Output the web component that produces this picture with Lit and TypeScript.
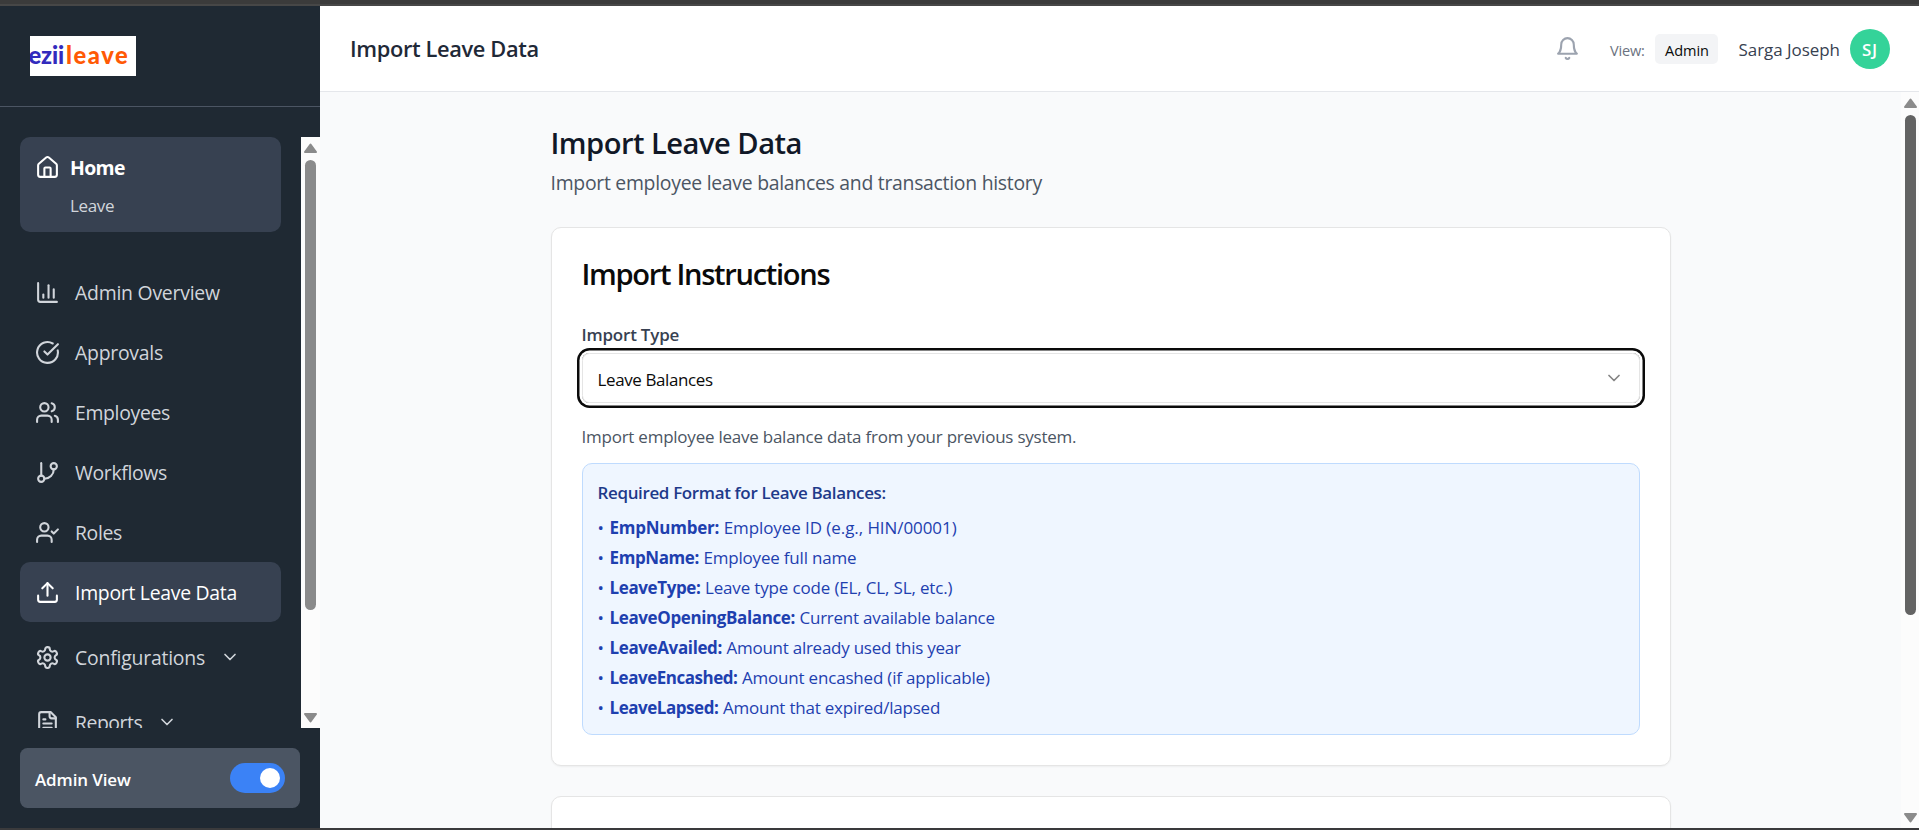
import { LitElement, html, svg, css, nothing } from "lit";
import { customElement, property, state } from "lit/decorators.js";
import { classMap } from "lit/directives/class-map.js";

const ICONS: Record<string, unknown> = {
  home: svg`<path d="M15 21v-8a1 1 0 0 0-1-1h-4a1 1 0 0 0-1 1v8"/><path d="M3 10a2 2 0 0 1 .709-1.528l7-5.999a2 2 0 0 1 2.582 0l7 5.999A2 2 0 0 1 21 10v9a2 2 0 0 1-2 2H5a2 2 0 0 1-2-2z"/>`,
  chart: svg`<path d="M3 3v16a2 2 0 0 0 2 2h16"/><path d="M18 17V9"/><path d="M13 17V5"/><path d="M8 17v-3"/>`,
  check: svg`<path d="M21.801 10A10 10 0 1 1 17 3.335"/><path d="m9 11 3 3L22 4"/>`,
  users: svg`<path d="M16 21v-2a4 4 0 0 0-4-4H6a4 4 0 0 0-4 4v2"/><circle cx="9" cy="7" r="4"/><path d="M22 21v-2a4 4 0 0 0-3-3.87"/><path d="M16 3.13a4 4 0 0 1 0 7.75"/>`,
  branch: svg`<path d="M6 3v12"/><circle cx="18" cy="6" r="3"/><circle cx="6" cy="18" r="3"/><path d="M18 9a9 9 0 0 1-9 9"/>`,
  userCheck: svg`<path d="M16 21v-2a4 4 0 0 0-4-4H6a4 4 0 0 0-4 4v2"/><circle cx="9" cy="7" r="4"/><path d="m16 11 2 2 4-4"/>`,
  upload: svg`<path d="M21 15v4a2 2 0 0 1-2 2H5a2 2 0 0 1-2-2v-4"/><path d="m17 8-5-5-5 5"/><path d="M12 3v12"/>`,
  settings: svg`<path d="M12.22 2h-.44a2 2 0 0 0-2 2v.18a2 2 0 0 1-1 1.73l-.43.25a2 2 0 0 1-2 0l-.15-.08a2 2 0 0 0-2.73.73l-.22.38a2 2 0 0 0 .73 2.73l.15.1a2 2 0 0 1 1 1.72v.51a2 2 0 0 1-1 1.74l-.15.09a2 2 0 0 0-.73 2.73l.22.38a2 2 0 0 0 2.73.73l.15-.08a2 2 0 0 1 2 0l.43.25a2 2 0 0 1 1 1.73V20a2 2 0 0 0 2 2h.44a2 2 0 0 0 2-2v-.18a2 2 0 0 1 1-1.73l.43-.25a2 2 0 0 1 2 0l.15.08a2 2 0 0 0 2.73-.73l.22-.39a2 2 0 0 0-.73-2.73l-.15-.08a2 2 0 0 1-1-1.74v-.5a2 2 0 0 1 1-1.74l.15-.09a2 2 0 0 0 .73-2.73l-.22-.38a2 2 0 0 0-2.73-.73l-.15.08a2 2 0 0 1-2 0l-.43-.25a2 2 0 0 1-1-1.73V4a2 2 0 0 0-2-2z"/><circle cx="12" cy="12" r="3"/>`,
  file: svg`<path d="M15 2H6a2 2 0 0 0-2 2v16a2 2 0 0 0 2 2h12a2 2 0 0 0 2-2V7Z"/><path d="M14 2v4a2 2 0 0 0 2 2h4"/><path d="M10 9H8"/><path d="M16 13H8"/><path d="M16 17H8"/>`,
  bell: svg`<path d="M6 8a6 6 0 0 1 12 0c0 7 3 9 3 9H3s3-2 3-9"/><path d="M10.3 21a1.94 1.94 0 0 0 3.4 0"/>`,
  chevron: svg`<path d="m6 9 6 6 6-6"/>`,
};

@customElement("ui-icon")
class UiIcon extends LitElement {
  @property() name = "home";
  static styles = css`
    :host { display: block; width: 25px; height: 25px; flex: none; }
    :host([small]) { width: 20px; height: 20px; }
    svg { display: block; width: 100%; height: 100%; fill: none; stroke: currentColor; stroke-width: 2; stroke-linecap: round; stroke-linejoin: round; }
  `;
  render() {
    return html`<svg viewBox="0 0 24 24">${ICONS[this.name]}</svg>`;
  }
}

/* A run of text tracked so that its glyphs span a given width. */
@customElement("fit-text")
class FitText extends LitElement {
  @property() text = "";
  @property({ type: Number }) span = 0;
  @state() spacing = 0;
  static styles = css`
    :host { display: inline-block; white-space: nowrap; }
    .run { display: inline-block; font-size: 0.97em; transform: translateY(0.04em); }
  `;
  firstUpdated() {
    const run = this.renderRoot.querySelector(".run") as HTMLElement;
    const cs = getComputedStyle(run);
    const ctx = document.createElement("canvas").getContext("2d")!;
    ctx.font = `${cs.fontWeight} ${cs.fontSize} ${cs.fontFamily}`;
    const m = ctx.measureText(this.text);
    const ink = m.actualBoundingBoxRight + m.actualBoundingBoxLeft;
    this.spacing = (this.span - ink) / Math.max(1, this.text.length - 1);
  }
  render() {
    return html`<span class="run" style="letter-spacing:${this.spacing}px">${this.text}</span>`;
  }
}

const t = (text: string, span: number) => html`<fit-text .text=${text} .span=${span}></fit-text>`;

@customElement("scroll-rail")
class ScrollRail extends LitElement {
  @property({ type: Number }) thumb = 100;
  @property() tone = "#8b8b8b";
  static styles = css`
    :host { display: flex; flex-direction: column; align-items: center; flex: none; background: #fcfcfc; box-sizing: border-box; padding: 6px 0 5px; }
    .arrow { width: 13px; height: 10px; display: block; fill: #8b8b8b; stroke: #8b8b8b; stroke-width: 2; stroke-linejoin: round; }
    .thumb { width: 11px; border-radius: 6px; margin-top: 7px; flex: none; }
    .fill { flex: 1; }
  `;
  render() {
    return html`
      <svg class="arrow" viewBox="0 0 13 10"><path d="M6.5 1.5 12 9H1z"/></svg>
      <div class="thumb" style="height:${this.thumb}px;background:${this.tone}"></div>
      <div class="fill"></div>
      <svg class="arrow" viewBox="0 0 13 10"><path d="M6.5 8.5 12 1H1z"/></svg>`;
  }
}

interface NavItem { icon: string; label: string; span: number; active?: boolean; menu?: boolean; }

const NAV: NavItem[] = [
  { icon: "chart", label: "Admin Overview", span: 145 },
  { icon: "check", label: "Approvals", span: 88 },
  { icon: "users", label: "Employees", span: 94 },
  { icon: "branch", label: "Workflows", span: 92 },
  { icon: "userCheck", label: "Roles", span: 46 },
  { icon: "upload", label: "Import Leave Data", span: 160.5, active: true },
  { icon: "settings", label: "Configurations", span: 129, menu: true },
  { icon: "file", label: "Reports", span: 66.5, menu: true },
];

@customElement("side-bar")
class SideBar extends LitElement {
  static styles = css`
    :host { display: flex; flex-direction: column; width: 320px; flex: none; background: #1f2933; color: #d1d5db; }
    .brand { height: 40px; border-bottom: 1px solid #4b5563; padding: 30px; }
    .logo { width: 106px; height: 40px; background: #fff; overflow: hidden; display: flex; font: 900 24.5px/35px "Lato", sans-serif; }
    .logo .a { color: #322bbd; margin-left: -1.5px; width: 37.5px; flex: none; }
    .logo .b { color: #ff5a05; flex: none; }
    .scroll { margin-top: 30px; height: 591px; display: flex; overflow: hidden; flex: none; }
    .items { flex: 1; padding: 0 20px; }
    .home { height: 95px; box-sizing: border-box; border-radius: 10px; background: #374151; padding: 15px; margin-bottom: 30px; }
    .home-row { display: flex; align-items: center; gap: 10px; height: 30px; font-size: 20px; font-weight: 700; color: #fff; }
    .home-sub { margin: 10px 0 0 35px; font-size: 17.5px; line-height: 25px; }
    .item { height: 60px; box-sizing: border-box; border-radius: 10px; display: flex; align-items: center; gap: 15px; padding: 0 15px; font-size: 20px; line-height: 30px; }
    .item.active { background: #374151; color: #fff; }
    .item.menu { margin-top: 5px; }
    .foot { margin: 20px; height: 60px; box-sizing: border-box; border-radius: 7.5px; background: #4b5563; padding: 0 15px; display: flex; align-items: center; justify-content: space-between; color: #fff; font-size: 17.5px; font-weight: 600; }
    .toggle { width: 55px; height: 30px; border-radius: 15px; background: #3b82f6; display: flex; align-items: center; justify-content: flex-end; padding-right: 5px; box-sizing: border-box; }
    .knob { width: 20px; height: 20px; border-radius: 50%; background: #fff; }
    .rail { width: 19px; }
  `;
  render() {
    return html`
      <div class="brand"><div class="logo"><span class="a">${t("ezii", 35.5)}</span><span class="b">${t("leave", 61)}</span></div></div>
      <div class="scroll">
        <nav class="items">
          <div class="home">
            <div class="home-row"><ui-icon name="home"></ui-icon>${t("Home", 54)}</div>
            <div class="home-sub">${t("Leave", 43)}</div>
          </div>
          ${NAV.map((n) => html`
            <div class=${classMap({ item: true, active: !!n.active, menu: !!n.menu })}>
              <ui-icon name=${n.icon}></ui-icon>${t(n.label, n.span)}
              ${n.menu ? html`<ui-icon name="chevron" small></ui-icon>` : nothing}
            </div>`)}
        </nav>
        <scroll-rail class="rail" .thumb=${450}></scroll-rail>
      </div>
      <div class="foot">${t("Admin View", 96)}<div class="toggle"><div class="knob"></div></div></div>`;
  }
}

const FIELDS: [string, number, string, number][] = [
  ["EmpNumber:", 108, "Employee ID (e.g., HIN/00001)", 232],
  ["EmpName:", 88, "Employee full name", 151.5],
  ["LeaveType:", 89.5, "Leave type code (EL, CL, SL, etc.)", 246.5],
  ["LeaveOpeningBalance:", 184, "Current available balance", 194],
  ["LeaveAvailed:", 111, "Amount already used this year", 234.5],
  ["LeaveEncashed:", 126.5, "Amount encashed (if applicable)", 248],
  ["LeaveLapsed:", 107.5, "Amount that expired/lapsed", 216],
];

@customElement("app-root")
class AppRoot extends LitElement {
  static styles = css`
    :host { display: flex; flex-direction: column; height: 830px; overflow: hidden; font-family: "Open Sans", "Noto Sans", sans-serif; font-size: 20px; line-height: 30px; background: #f9fafb; }
    .top { height: 6px; flex: none; box-sizing: border-box; background: #3b3b3b; border-bottom: 2px solid #474747; }
    .bottom { height: 2px; flex: none; background: #3a3a3c; }
    .shell { display: flex; height: 822px; }
    .page { flex: 1; display: flex; flex-direction: column; min-width: 0; }
    .bar { height: 86px; box-sizing: border-box; flex: none; background: #fff; border-bottom: 1px solid #e5e7eb; padding: 0 29px 0 30px; display: flex; align-items: center; color: #1f2937; }
    .bar-title { font-size: 22.5px; font-weight: 600; flex: 1; padding-bottom: 2px; }
    .bell { color: #9ca3af; margin-right: 30px; }
    .view { font-size: 15px; color: #6b7280; width: 35px; margin-right: 10px; }
    .chip { box-sizing: border-box; width: 63px; height: 30px; border-radius: 5px; background: #f3f4f6; color: #0a0a0a; font-size: 15px; font-weight: 500; padding-left: 10px; line-height: 30px; margin-right: 20.5px; }
    .name { font-size: 17.5px; color: #374151; width: 101.5px; margin-right: 10px; }
    .avatar { width: 40px; height: 40px; border-radius: 50%; background: #34d399; color: #fff; font-size: 17.5px; font-weight: 600; display: flex; align-items: center; justify-content: center; }
    .body { flex: 1; display: flex; min-height: 0; overflow: hidden; }
    .main { flex: 1; padding-top: 30px; display: flex; flex-direction: column; align-items: center; overflow: hidden; }
    .col { width: 1120px; flex: none; }
    .rail { width: 18px; }
    .h1 { font-size: 30px; line-height: 40px; font-weight: 600; color: #111827; }
    .sub { margin: 5px 0 30px; color: #4b5563; height: 30px; }
    .card { background: #fff; border: 1px solid #e5e5e5; border-radius: 10px; box-shadow: 0 1px 2px rgba(0, 0, 0, 0.05); box-sizing: border-box; padding: 30px; margin-bottom: 30px; }
    .empty { height: 200px; }
    .h2 { font-size: 30px; line-height: 30px; height: 30px; font-weight: 600; color: #0a0a0a; margin-bottom: 30px; }
    .label { font-size: 17.5px; font-weight: 600; color: #374151; height: 30px; margin-bottom: 5px; line-height: 30px; }
    .select { height: 50px; box-sizing: border-box; border: 1px solid #e5e5e5; border-radius: 7.5px; padding: 0 15px; display: flex; align-items: center; justify-content: space-between; font-size: 17.5px; color: #0a0a0a; box-shadow: 0 0 0 2.5px #fff, 0 0 0 5px #0a0a0a; }
    .dim { opacity: 0.5; }
    .hint { font-size: 17.5px; line-height: 25px; height: 25px; color: #4b5563; margin: 20px 0 15px; }
    .info { border: 1px solid #bfdbfe; background: #eff6ff; border-radius: 10px; padding: 15px; font-size: 17.5px; line-height: 25px; color: #1e40af; display: flex; flex-direction: column; gap: 5px; }
    .info-title { font-weight: 600; color: #1e3a8a; height: 25px; margin-bottom: 5px; }
    .row { display: flex; height: 25px; }
    .dot { width: 12px; }
    .key { font-weight: 700; margin-right: 4.5px; }
  `;
  render() {
    return html`
      <div class="top"></div>
      <div class="shell">
        <side-bar></side-bar>
        <div class="page">
          <header class="bar">
            <div class="bar-title">${t("Import Leave Data", 185.5)}</div>
            <ui-icon class="bell" name="bell"></ui-icon>
            <div class="view">${t("View:", 34)}</div>
            <div class="chip">${t("Admin", 43)}</div>
            <div class="name">${t("Sarga Joseph", 101)}</div>
            <div class="avatar">${t("SJ", 14)}</div>
          </header>
          <div class="body">
            <main class="main">
              <div class="col">
                <div class="h1">${t("Import Leave Data", 248)}</div>
                <div class="sub">${t("Import employee leave balances and transaction history", 491)}</div>
                <section class="card">
                  <div class="h2">${t("Import Instructions", 246)}</div>
                  <div class="label">${t("Import Type", 96)}</div>
                  <div class="select">${t("Leave Balances", 114.5)}<ui-icon class="dim" name="chevron" small></ui-icon></div>
                  <div class="hint">${t("Import employee leave balance data from your previous system.", 493.5)}</div>
                  <div class="info">
                    <div class="info-title">${t("Required Format for Leave Balances:", 287)}</div>
                    ${FIELDS.map(([k, kw, d, dw]) => html`
                      <div class="row"><span class="dot">${t("•", 6)}</span><span class="key">${t(k, kw)}</span>${t(d, dw)}</div>`)}
                  </div>
                </section>
                <section class="card empty"></section>
              </div>
            </main>
            <scroll-rail class="rail" .thumb=${500} tone="#636363"></scroll-rail>
          </div>
        </div>
      </div>
      <div class="bottom"></div>`;
  }
}
